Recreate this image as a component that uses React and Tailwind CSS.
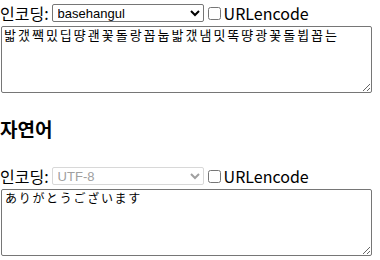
import React from 'react'

const Row = ({ value, disabled, text, tracking }) => (
  <div>
    <div className="flex items-center h-[26px] text-[16px] text-black leading-none">
      <span>인코딩:</span>
      <select
        defaultValue={value}
        disabled={disabled}
        className={
          disabled
            ? "appearance-auto ml-[3px] w-[152px] h-[18px] text-[13px] border border-[#d8d8d8] rounded-[2px] px-[1px] text-[#a0a0a0] bg-white font-['Liberation_Sans',Arial,sans-serif]"
            : "appearance-auto ml-[3px] w-[152px] h-[18px] text-[13px] border border-[#767676] rounded-[2px] px-[1px] text-black bg-white font-['Liberation_Sans',Arial,sans-serif]"
        }
      >
        <option value={value}>{value}</option>
      </select>
      <input type="checkbox" className="appearance-auto ml-[4px] mr-[3px] w-[13px] h-[13px]" />
      <span>URLencode</span>
    </div>
    <textarea
      defaultValue={text}
      className={
        tracking
          ? "block ml-[1px] w-[371px] h-[67px] border border-[#767676] rounded-[2px] px-[2px] pt-[1px] text-[13px] leading-[16px] tracking-[2px] text-black resize-y font-['DejaVu_Sans_Mono','Noto_Sans_CJK_KR',monospace]"
          : "block ml-[1px] w-[371px] h-[67px] border border-[#767676] rounded-[2px] px-[3px] pt-[1px] text-[12px] leading-[16px] tracking-[1.7px] text-black resize-y font-['DejaVu_Sans_Mono','Noto_Sans_CJK_JP',monospace]"
      }
    />
  </div>
)

export default function App() {
  return (
    <div className="bg-white w-[380px] h-[260px] overflow-hidden font-['Noto_Sans_CJK_KR','Noto_Sans',sans-serif]">
      <Row value="basehangul" tracking text="밟갰짹밌딥땽괜꽃돌랑꼽눕밟갰냄밋똑땽광꽃돌뷥꼽는" />
      <h3 className="mt-[24px] mb-[22px] text-[19px] font-bold leading-[24px] text-black">자연어</h3>
      <Row value="UTF-8" disabled text="ありがとうございます" />
    </div>
  )
}
